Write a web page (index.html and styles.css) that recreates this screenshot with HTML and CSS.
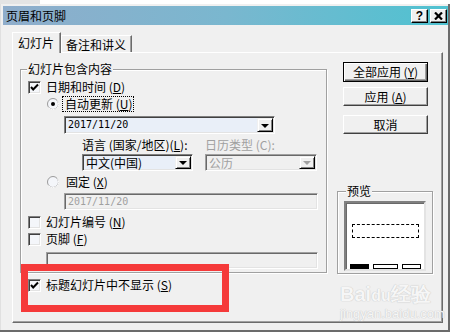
FILE: index.html
```html
<!DOCTYPE html>
<html>
<head>
<meta charset="utf-8">
<link rel="stylesheet" href="styles.css">
</head>
<body>
<div class="topstrip"></div>
<div class="dialog">
  <div class="titlebar">
    <span class="title">页眉和页脚</span>
    <div class="tb-btns">
      <span class="tb-btn q">?</span>
      <span class="tb-btn"><svg width="9" height="8" viewBox="0 0 9 8"><path d="M1 0.5 L8 7.5 M8 0.5 L1 7.5" stroke="#000" stroke-width="2.2"/></svg></span>
    </div>
  </div>
  <div class="tabs">
    <div class="tab active">幻灯片</div>
    <div class="tab second">备注和讲义</div>
  </div>
  <div class="panel">
    <div class="left">
      <div class="group main">
        <div class="group-title">幻灯片包含内容</div>
        <div class="row cbrow">
          <span class="cb"><svg width="11" height="11" viewBox="0 0 11 11"><path d="M2 5 L4.2 7.5 L9 2.5" fill="none" stroke="#000" stroke-width="2"/></svg></span>
          <span>日期和时间 (<u>D</u>)</span>
        </div>
        <div class="row radiorow">
          <span class="radio on"><svg width="12" height="12" viewBox="0 0 12 12"><circle cx="6" cy="6" r="5.5" fill="#f4f6fa" stroke="#9a9a9a"/><path d="M1.5 9.5 A5.5 5.5 0 0 0 10.5 2.5" fill="none" stroke="#fff"/><circle cx="6" cy="6" r="2" fill="#000"/></svg></span>
          <span class="focus">自动更新 (<u>U</u>)</span>
        </div>
        <div class="combo c1">
          <span class="ctext mono">2017/11/20</span>
          <span class="dd"><i class="tri"></i></span>
        </div>
        <div class="row labels">
          <span class="lbl1">语言 (国家/地区)(<u>L</u>):</span>
          <span class="dis">日历类型 (C):</span>
        </div>
        <div class="row combos">
          <div class="combo c2">
            <span class="ctext">中文(中国)</span>
            <span class="dd"><i class="tri"></i></span>
          </div>
          <div class="combo c3 disabled">
            <span class="ctext">公历</span>
            <span class="dd"><i class="tri"></i></span>
          </div>
        </div>
        <div class="row radiorow r2">
          <span class="radio"><svg width="12" height="12" viewBox="0 0 12 12"><circle cx="6" cy="6" r="5.5" fill="#f4f6fa" stroke="#9a9a9a"/><path d="M1.5 9.5 A5.5 5.5 0 0 0 10.5 2.5" fill="none" stroke="#fff"/></svg></span>
          <span class="plain">固定 (<u>X</u>)</span>
        </div>
        <div class="textbox tb1 disabled"><span class="mono">2017/11/20</span></div>
        <div class="row cbrow r3">
          <span class="cb"></span>
          <span>幻灯片编号 (<u>N</u>)</span>
        </div>
        <div class="row cbrow r4">
          <span class="cb"></span>
          <span>页脚 (<u>F</u>)</span>
        </div>
        <div class="textbox tb2 disabled"></div>
      </div>
      <div class="row cbrow last">
        <span class="cb"><svg width="11" height="11" viewBox="0 0 11 11"><path d="M2 5 L4.2 7.5 L9 2.5" fill="none" stroke="#000" stroke-width="2"/></svg></span>
        <span>标题幻灯片中不显示 (<u>S</u>)</span>
      </div>
    </div>
    <div class="right">
      <div class="btn default"><span>全部应用 (<u>Y</u>)</span></div>
      <div class="btn b2"><span>应用 (<u>A</u>)</span></div>
      <div class="btn b3"><span>取消</span></div>
      <div class="group preview">
        <div class="group-title">预览</div>
        <div class="pbox">
          <div class="dash"></div>
          <div class="bars">
            <span class="bar black"></span>
            <span class="bar w1"></span>
            <span class="bar w2"></span>
          </div>
        </div>
      </div>
    </div>
  </div>
  <div class="redbox"></div>
  <div class="watermark">
    <div class="wm1">Bai<span class="paw">du</span>经验</div>
    <div class="wm2">jingyan.baidu.com</div>
  </div>
</div>
</body>
</html>
```
FILE: styles.css
```css
* { box-sizing: border-box; }
body {
  margin: 0;
  width: 454px;
  height: 334px;
  overflow: hidden;
  background: #ffffff;
  font: 12px/14px "Noto Sans CJK SC", "Noto Sans", sans-serif;
  color: #000;
}
u { text-decoration: underline; text-underline-offset: 1px; }
.topstrip {
  height: 4px;
  width: 40px;
  background: #e4e4e4;
}
.dialog {
  position: relative;
  width: 450px;
  height: 328px;
  background: #f0f0f0;
  border-right: 2px solid #6b6b6b;
  border-bottom: 2px solid #6b6b6b;
  box-shadow: inset 1px 0 #e0e0e0;
  padding: 2px 0 0 3px;
}
.titlebar {
  height: 19px;
  display: flex;
  align-items: center;
  justify-content: space-between;
  padding: 0 1px 0 3px;
  background: linear-gradient(to right, #8fadcb, #7ab7cf 50%, #4fc2d1);
}
.title { font-size: 12px; line-height: 14px; }
.tb-btns { display: flex; gap: 2px; }
.tb-btn {
  width: 17px;
  height: 14px;
  background: #f0f0f0;
  border: 1px solid;
  border-color: #fff #000 #000 #fff;
  box-shadow: inset -1px -1px #808080;
  display: flex;
  align-items: center;
  justify-content: center;
  font: bold 12px/12px "Liberation Sans", sans-serif;
}
.tabs {
  margin-top: 7px;
  padding-left: 9px;
  height: 20px;
  display: flex;
  align-items: flex-end;
}
.tab {
  background: #f0f0f0;
  border-top: 1px solid #fff;
  border-left: 1px solid #fff;
  border-right: 1px solid #6b6b6b;
  box-shadow: inset -1px 0 #a0a0a0;
}
.tab.active {
  width: 49px;
  height: 21px;
  margin-bottom: -1px;
  position: relative;
  z-index: 1;
  padding: 3px 0 0 5px;
}
.tab.second {
  width: 71px;
  height: 17px;
  padding: 2px 0 0 4px;
}
.panel {
  margin-left: 9px;
  width: 431px;
  height: 271px;
  border-top: 1px solid #fff;
  border-left: 1px solid #fff;
  border-right: 1px solid #6b6b6b;
  border-bottom: 1px solid #6b6b6b;
  box-shadow: inset -1px -1px #a0a0a0;
  display: flex;
  padding-left: 7px;
}
.left { width: 307px; }
.group {
  border: 1px solid #a0a0a0;
  box-shadow: inset 1px 1px #fff, 1px 1px #fff;
}
.group-title {
  width: fit-content;
  margin: -8px 0 0 6px;
  padding: 0 1px;
  height: 14px;
  background: #f0f0f0;
}
.main { margin-top: 16px; padding-bottom: 3px; }
.row { display: flex; align-items: center; height: 16px; }
.cbrow { gap: 5px; padding-left: 7px; margin-top: 3px; }
.cb {
  width: 13px;
  height: 13px;
  border: 1px solid;
  border-color: #808080 #fff #fff #808080;
  box-shadow: inset 1px 1px #404040, inset -1px -1px #e3e3e3;
  background: #f4f6fa;
  display: flex;
  align-items: center;
  justify-content: center;
  flex: none;
}
.cb svg { margin-left: 0; }
.radiorow { padding-left: 26px; margin-top: 1px; gap: 4px; }
.radio { width: 12px; height: 12px; display: flex; flex: none; }
.focus {
  outline: 1px dotted #000;
  outline-offset: 0;
  padding: 0 1px 0 2px;
  line-height: 14px;
}
.plain { padding-left: 3px; }
.r2 { margin-top: 3px; }
.mono { font: 10px/14px "DejaVu Sans Mono", monospace; }
.combo {
  height: 18px;
  display: flex;
  align-items: stretch;
  justify-content: space-between;
  border: 1px solid;
  border-color: #808080 #fff #fff #808080;
  box-shadow: inset 1px 1px #404040, inset -1px -1px #e3e3e3;
  background: #e9eff8;
  padding: 1px;
}
.ctext { padding-left: 2px; display: flex; align-items: center; }
.c1 { margin: 4px 0 0 43px; width: 211px; }
.dd {
  width: 16px;
  background: #f0f0f0;
  border: 1px solid;
  border-color: #f0f0f0 #000 #000 #f0f0f0;
  box-shadow: inset 1px 1px #fff, inset -1px -1px #808080;
  display: flex;
  align-items: center;
  justify-content: center;
}
.tri {
  width: 0;
  height: 0;
  border-left: 4px solid transparent;
  border-right: 4px solid transparent;
  border-top: 4px solid #000;
  margin-top: 1px;
}
.labels { margin-top: 3px; padding-left: 61px; }
.lbl1 { width: 123px; }
.dis { color: #a0a0a0; }
.combos { margin-top: 1px; padding-left: 61px; height: 17px; gap: 12px; }
.combos .combo { height: 17px; }
.c2 { width: 111px; }
.c3 { width: 112px; }
.combo.disabled {
  background: #f0f0f0;
  color: #a0a0a0;
  border-color: #a0a0a0 #fff #fff #a0a0a0;
  box-shadow: inset 1px 1px #696969, inset -1px -1px #e3e3e3;
}
.combo.disabled .tri { border-top-color: #a0a0a0; }
.textbox {
  height: 17px;
  border: 1px solid;
  border-color: #a0a0a0 #fff #fff #a0a0a0;
  box-shadow: inset 1px 1px #696969, inset -1px -1px #e3e3e3;
  background: #f0f0f0;
  color: #a0a0a0;
  padding: 1px 0 0 3px;
  display: flex;
  align-items: center;
}
.tb1 { margin: 3px 0 0 43px; width: 254px; }
.r3 { margin-top: 4px; }
.r4 { margin-top: 1px; }
.tb2 { margin: 5px 0 0 25px; width: 272px; }
.last { margin-top: 4px; padding-left: 8px; }
.right { margin-left: 10px; width: 96px; }
.btn {
  width: 85px;
  height: 19px;
  margin-left: 6px;
  background: #f0f0f0;
  border: 1px solid;
  border-color: #fff #404040 #404040 #fff;
  box-shadow: inset -1px -1px #a0a0a0;
  display: flex;
  align-items: center;
  justify-content: center;
}
.btn.default {
  height: 20px;
  margin-top: 9px;
  border: 1px solid #000;
  box-shadow: inset 1px 1px #fff, inset -1px -1px #696969, inset -2px -2px #a0a0a0;
}
.b2 { margin-top: 5px; }
.b3 { margin-top: 9px; }
.preview { margin-top: 57px; width: 96px; padding-bottom: 2px; }
.preview .group-title { margin-left: 8px; }
.pbox {
  margin: 3px 0 0 6px;
  width: 82px;
  height: 70px;
  background: #fff;
  border: 2px solid;
  border-color: #808080 #e3e3e3 #e3e3e3 #808080;
  box-shadow: inset 1px 1px #696969;
  padding: 0 0 0 4px;
}
.dash {
  margin: 21px 0 0 2px;
  width: 67px;
  height: 14px;
  border: 1px dashed #000;
}
.bars { margin-top: 26px; display: flex; gap: 4px; height: 5px; }
.bar { height: 5px; border: 1px solid #000; background: #fff; }
.bar.black { width: 19px; background: #000; }
.bar.w1 { width: 25px; }
.bar.w2 { width: 19px; }
.redbox {
  position: absolute;
  left: 21px;
  top: 260px;
  width: 208px;
  height: 48px;
  border: 7px solid #f53a3a;
}
.watermark {
  position: absolute;
  left: 340px;
  top: 278px;
  color: #f6f6f6;
  text-shadow: 0 0 1px #c8c8c8, 0 0 1px #c8c8c8;
}
.wm1 { font: bold 20px/24px "Liberation Sans", sans-serif; letter-spacing: 0; }
.paw { font-size: 16px; }
.wm2 { font: 13px/16px "Liberation Sans", sans-serif; margin-top: -2px; }
```
